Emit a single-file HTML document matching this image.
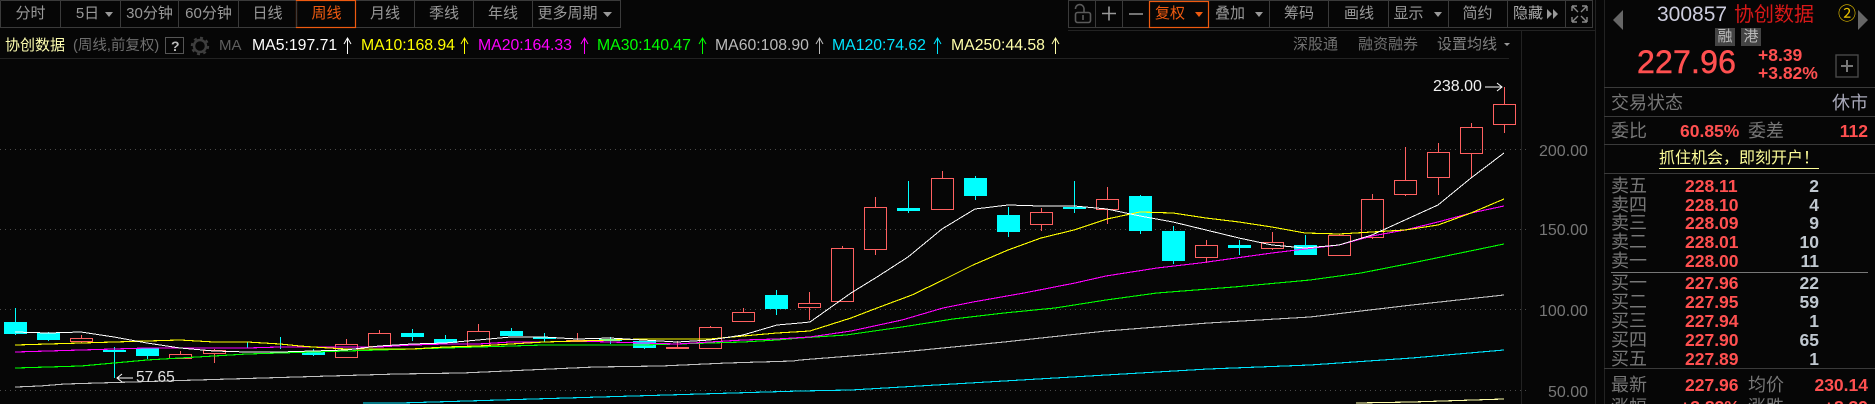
<!DOCTYPE html>
<html lang="zh"><head><meta charset="utf-8"><title>协创数据</title>
<style>
html,body{margin:0;padding:0;background:#060606;}
#p{position:relative;width:1875px;height:404px;overflow:hidden;background:#060606;font-family:"Liberation Sans","Noto Sans CJK SC",sans-serif;color:#888;}
.t{position:absolute;white-space:nowrap;line-height:20px;height:20px;}
.c{position:absolute;top:1px;height:26px;line-height:26px;font-size:15px;color:#999;text-align:center;box-sizing:border-box;border-right:1px solid #3a3a3a;}
.r{color:#ff5050;font-weight:bold;font-size:17.5px;}
.l{color:#777;font-size:18px;left:1611px;}
.q{color:#c0c8d0;font-weight:bold;font-size:17.5px;right:56px;}
.rr{right:7px;}
svg{position:absolute;left:0;top:0;}
</style></head><body><div id="p">
<svg width="1875" height="404" viewBox="0 0 1875 404">
<g fill="none" shape-rendering="crispEdges">
<path stroke="#3a3a3a" d="M0.5 .5H621M.5 .5V27M60.5 0V27M0 27.5H621M1068.5 .5H1592.5V27.5H1068.5ZM1068.5 .5V27M1095.5 0V27M1122.5 0V27M1269.5 0V27M1328.5 0V27M1388.5 0V27M1448.5 0V27M1507.5 0V27M1565.5 0V27"/>
<path stroke="#222" d="M0 58.5H1509M1068 30.5H1595M1595.5 0V404M1521.5 30V404M1604.5 0V404"/>
<path stroke="#3a3a3a" d="M1604 87.5H1875M1604 116.5H1875M1604 144.5H1875M1604 173.5H1875M1604 368.5H1875"/>
<path stroke="#777" d="M1611 272.5H1868"/>
<path stroke="#4a4a4a" stroke-dasharray="1 4" d="M0 149.5H1526M0 229.5H1526M0 309.5H1526M0 390.5H1526"/>
</g>
<path fill="#00ffff" shape-rendering="crispEdges" d="M4 322h23v12h-23zM15 308h1v27h-1zM37 333h23v7h-23zM48 332h1v9h-1zM103 350h23v2h-23zM114 347h1v31h-1zM136 348h23v8h-23zM147 348h1v11h-1zM247 342h1v6h-1zM280 337h1v12h-1zM302 352h23v3h-23zM313 349h1v7h-1zM401 333h23v4h-23zM412 329h1v12h-1zM434 339h23v4h-23zM445 335h1v8h-1zM500 331h23v5h-23zM511 328h1v8h-1zM533 337h23v2h-23zM544 333h1v9h-1zM599 339h23v2h-23zM610 337h1v7h-1zM633 341h23v7h-23zM644 341h1v8h-1zM765 295h23v14h-23zM776 290h1v25h-1zM897 208h23v3h-23zM908 181h1v32h-1zM964 178h23v18h-23zM975 176h1v24h-1zM997 215h23v17h-23zM1008 207h1v30h-1zM1063 207h23v2h-23zM1074 181h1v32h-1zM1129 196h23v35h-23zM1140 195h1v39h-1zM1162 231h23v30h-23zM1173 226h1v38h-1zM1228 245h23v3h-23zM1239 240h1v15h-1zM1294 245h23v10h-23zM1305 235h1v20h-1z"/>
<g fill="none" stroke="#ff6060" stroke-width="1" shape-rendering="crispEdges">
<path d="M81.5 335V338M81.5 341V343M70.5 338.5h22v3h-22z"/>
<path d="M180.5 351V354M180.5 358V359M169.5 354.5h22v4h-22z"/>
<path d="M214.5 349V350M214.5 353V363M203.5 350.5h22v3h-22z"/>
<path d="M346.5 339V344M335.5 344.5h22v13h-22z"/>
<path d="M379.5 330V333M368.5 333.5h22v13h-22z"/>
<path d="M478.5 324V331M467.5 331.5h22v15h-22z"/>
<path d="M577.5 333V340M566.5 340.5h22v1h-22z"/>
<path d="M677.5 341V347M666.5 347.5h22v1h-22z"/>
<path d="M710.5 326V327M699.5 327.5h22v21h-22z"/>
<path d="M743.5 308V312M732.5 312.5h22v9h-22z"/>
<path d="M809.5 292V303M809.5 307V320M798.5 303.5h22v4h-22z"/>
<path d="M842.5 246V248M831.5 248.5h22v53h-22z"/>
<path d="M875.5 197V207M875.5 249V255M864.5 207.5h22v42h-22z"/>
<path d="M942.5 171V178M931.5 178.5h22v31h-22z"/>
<path d="M1041.5 208V212M1041.5 224V231M1030.5 212.5h22v12h-22z"/>
<path d="M1107.5 187V199M1107.5 209V224M1096.5 199.5h22v10h-22z"/>
<path d="M1206.5 240V245M1206.5 257V263M1195.5 245.5h22v12h-22z"/>
<path d="M1272.5 232V242M1272.5 248V250M1261.5 242.5h22v6h-22z"/>
<path d="M1339.5 234V235M1328.5 235.5h22v20h-22z"/>
<path d="M1372.5 194V199M1372.5 237V239M1361.5 199.5h22v38h-22z"/>
<path d="M1405.5 147V180M1405.5 194V196M1394.5 180.5h22v14h-22z"/>
<path d="M1438.5 143V152M1438.5 177V195M1427.5 152.5h22v25h-22z"/>
<path d="M1471.5 123V127M1471.5 153V178M1460.5 127.5h22v26h-22z"/>
<path d="M1504.5 87V104M1504.5 124V133M1493.5 104.5h22v20h-22z"/>
</g>
<g fill="none" stroke-width="1.1" shape-rendering="crispEdges">
<polyline stroke="#ffffaa" points="1356,403 1412,402 1504,399"/>
<polyline stroke="#00e5ff" points="363,403 400,403 467,401 533,399 600,397 667,395 733,393 800,391 851,390 902,387 1004,381 1106,375 1208,369 1310,365 1412,358 1504,350"/>
<polyline stroke="#c0c0c0" points="15,387 40,386 65,384 98,383 132,382 197,380 263,378 330,376 397,374 462,373 528,370 595,367 661,366 727,363 793,361 800,360 902,352 1004,342 1106,331 1208,323 1310,317 1412,305 1504,295"/>
<polyline stroke="#00ff00" points="15,368 48,367 81,366 114,363 147,360 180,358 214,356 247,354 280,353 313,352 346,351 379,350 412,349 445,348 478,347 511,346 544,345 610,345 643,345 677,344 710,343 743,342 777,340 800,338 846,335 902,327 953,319 1004,313 1055,308 1106,300 1157,293 1234,287 1310,280 1361,273 1412,263 1504,244"/>
<polyline stroke="#ff00ff" points="15,352 48,351 81,350 114,349 147,348 180,348 214,348 247,348 280,347 346,347 379,347 412,345 445,344 478,344 511,342 544,342 577,341 610,342 643,343 677,344 710,342 743,340 777,339 810,337 851,331 902,320 943,308 973,302 1024,293 1075,283 1106,276 1157,268 1200,263 1272,253 1305,249 1339,245 1372,236 1405,230 1438,222 1471,213 1504,206"/>
<polyline stroke="#ffff00" points="15,345 48,344 81,343 114,342 147,341 180,340 214,342 247,342 280,344 300,346 313,347 346,349 379,349 412,349 445,347 478,346 511,344 544,342 577,341 610,340 643,339 677,339 710,339 743,336 777,333 810,331 851,318 877,308 912,295 943,280 973,265 1008,250 1041,238 1074,230 1107,219 1140,212 1173,213 1206,218 1239,222 1272,227 1305,233 1339,234 1372,232 1405,230 1438,225 1471,213 1504,199"/>
<polyline stroke="#ffffff" stroke-width="1" points="15,332 48,333 81,332 114,337 147,343 180,348 214,351 247,352 280,352 313,351 346,350 379,346 412,344 445,343 478,340 511,337 544,337 577,339 610,338 643,340 677,342 710,340 743,335 777,325 800,323 810,322 851,293 877,277 908,257 942,229 975,209 1008,205 1041,206 1074,206 1107,209 1140,216 1173,222 1206,230 1239,238 1272,245 1305,248 1339,245 1372,235 1405,220 1438,205 1471,178 1504,153"/>
</g>
<g fill="none" stroke-width="1">
<path stroke="#fff" d="M117 378H133M122 374L117 378L122 382"/>
<path stroke="#fff" d="M1485 87H1502M1497 83L1502 87L1497 91"/>
<path stroke="#fff" d="M347.5 54V38M344 44L347.5 38L351 44"/>
<path stroke="#ffff00" d="M464.5 54V38M461 44L464.5 38L468 44"/>
<path stroke="#ff00ff" d="M584.5 54V38M581 44L584.5 38L588 44"/>
<path stroke="#00ff00" d="M702.5 54V38M699 44L702.5 38L706 44"/>
<path stroke="#bbb" d="M819.5 54V38M816 44L819.5 38L823 44"/>
<path stroke="#00e5ff" d="M937.5 54V38M934 44L937.5 38L941 44"/>
<path stroke="#ffffaa" d="M1055.5 54V38M1052 44L1055.5 38L1059 44"/>
<rect x="165.5" y="37.5" width="18" height="16" stroke="#555"/>
<circle cx="200" cy="46" r="6" stroke="#3e3e3e" stroke-width="2.5"/>
<circle cx="200" cy="46" r="8.2" stroke="#3e3e3e" stroke-width="2" stroke-dasharray="3 3.4"/>
<rect x="1075.5" y="12.5" width="15" height="10" rx="2" stroke="#5a5a5a" stroke-width="1.6"/>
<path stroke="#5a5a5a" stroke-width="1.6" d="M1084 12V8.5A4.3 4.3 0 0 0 1075.5 8V9M1083 15V20"/>
<path stroke="#999" stroke-width="1.6" d="M1102 13.5H1116M1109 6.5V20.5M1129 14H1143"/>
<rect x="1836" y="55" width="22" height="22" stroke="#484848" stroke-width="1.4"/>
<path stroke="#777" stroke-width="2" d="M1847 60V72M1841 66H1853"/>
<rect x="1149.5" y="1.5" width="59" height="26" stroke="#ee5a10" stroke-width="1.2"/>
<rect x="296.5" y=".5" width="59" height="27" stroke="#ee5a10" stroke-width="1.2"/>
<path stroke="#888" stroke-width="1.4" d="M1572 6H1577M1572 6V11M1572 6L1578 12M1587 6H1582M1587 6V11M1587 6L1581 12M1572 22H1577M1572 22V17M1572 22L1578 16M1587 22H1582M1587 22V17M1587 22L1581 16"/>
</g>
<g shape-rendering="auto">
<path fill="#999" d="M105 12h8l-4 5zM603 12h9l-4.500 5zM1255 12h8l-4 5zM1434 12h8l-4 5zM1504 43h6l-3 3zM1547 9l5 5-5 5zM1553 9l5 5-5 5z"/>
<path fill="#ee5a10" d="M1195 12h8l-4 5z"/>
<path fill="#666" d="M1623 10V30L1613 20zM1858 10V30L1868 20z"/>
</g>
</svg>

<div class="c" style="left:1px;width:60px">分时</div>
<div class="c" style="left:61px;width:60px;padding-right:6px">5日</div>
<div class="c" style="left:121px;width:58px">30分钟</div>
<div class="c" style="left:179px;width:60px">60分钟</div>
<div class="c" style="left:239px;width:58px">日线</div>
<div class="c" style="left:297px;width:59px;color:#ee5a10;border:0">周线</div>
<div class="c" style="left:356px;width:59px">月线</div>
<div class="c" style="left:415px;width:59px">季线</div>
<div class="c" style="left:474px;width:59px">年线</div>
<div class="c" style="left:533px;width:88px;padding-right:18px">更多周期</div>

<div class="c" style="left:1149px;width:60px;color:#ee5a10;border:0;padding-right:18px">复权</div>
<div class="c" style="left:1209px;width:60px;border:0;padding-right:18px">叠加</div>
<div class="c" style="left:1269px;width:60px;border:0">筹码</div>
<div class="c" style="left:1329px;width:60px;border:0">画线</div>
<div class="c" style="left:1389px;width:59px;border:0;padding-right:20px">显示</div>
<div class="c" style="left:1448px;width:59px;border:0">简约</div>
<div class="t" style="left:1513px;top:4px;font-size:15px;color:#aaa">隐藏</div>

<div class="t" style="left:5px;top:36px;font-size:15px;color:#ffffb0">协创数据</div>
<div class="t" style="left:73px;top:36px;font-size:14.500px;color:#6e6e6e">(周线,前复权)</div>
<div class="t" style="left:171px;top:36px;font-size:14px;color:#bbb;font-weight:bold">?</div>
<div class="t" style="left:219px;top:36px;font-size:15px;color:#5e5e5e">MA</div>
<div class="t" style="left:252px;top:36px;font-size:15.800px;color:#fff">MA5:197.71</div>
<div class="t" style="left:361px;top:36px;font-size:15.800px;color:#ff0">MA10:168.94</div>
<div class="t" style="left:478px;top:36px;font-size:15.800px;color:#f0f">MA20:164.33</div>
<div class="t" style="left:597px;top:36px;font-size:15.800px;color:#0f0">MA30:140.47</div>
<div class="t" style="left:715px;top:36px;font-size:15.800px;color:#bbb">MA60:108.90</div>
<div class="t" style="left:832px;top:36px;font-size:15.800px;color:#00e5ff">MA120:74.62</div>
<div class="t" style="left:951px;top:36px;font-size:15.800px;color:#ffffaa">MA250:44.58</div>
<div class="t" style="left:1293px;top:35px;font-size:15px;color:#707070">深股通</div>
<div class="t" style="left:1358px;top:35px;font-size:15px;color:#707070">融资融券</div>
<div class="t" style="left:1437px;top:35px;font-size:15px;color:#808080">设置均线</div>

<div class="t" style="left:136px;top:368px;font-size:15.500px;color:#e0e0e0">57.65</div>
<div class="t" style="left:1433px;top:77px;font-size:16px;color:#f0f0f0">238.00</div>
<div class="t" style="left:1539px;top:142px;font-size:16px;color:#777">200.00</div>
<div class="t" style="left:1539px;top:221px;font-size:16px;color:#777">150.00</div>
<div class="t" style="left:1539px;top:302px;font-size:16px;color:#777">100.00</div>
<div class="t" style="left:1548px;top:383px;font-size:16px;color:#777">50.00</div>

<div class="t" style="left:1657px;top:3px;font-size:21px;line-height:24px;height:24px;color:#ccd">300857</div>
<div class="t" style="left:1734px;top:3px;font-size:20px;line-height:24px;height:24px;color:#d81818">协创数据</div>
<div class="t" style="left:1838px;top:4px;font-size:18px;color:#e8c000">②</div>
<div class="t" style="left:1715px;top:28px;width:20px;height:18px;line-height:18px;text-align:center;font-size:15px;color:#bbb;background:#444">融</div>
<div class="t" style="left:1741px;top:28px;width:20px;height:18px;line-height:18px;text-align:center;font-size:15px;color:#bbb;background:#444">港</div>
<div class="t" style="left:1637px;top:45px;font-size:32px;line-height:34px;height:34px;color:#ff5050;-webkit-text-stroke:.5px #ff5050;letter-spacing:.2px">227.96</div>
<div class="t r" style="left:1758px;top:45px">+8.39</div>
<div class="t r" style="left:1758px;top:63px">+3.82%</div>

<div class="t l" style="top:93px">交易状态</div>
<div class="t" style="right:7px;top:93px;font-size:18px;color:#aab">休市</div>
<div class="t l" style="top:121px">委比</div>
<div class="t r" style="left:1680px;top:121px">60.85%</div>
<div class="t l" style="left:1748px;top:121px">委差</div>
<div class="t r rr" style="top:121px">112</div>
<div class="t" style="left:1659px;top:149px;font-size:16px;color:#ffff99;border-bottom:1px solid #ffff99;height:19px;line-height:20px">抓住机会，即刻开户！</div>

<div class="t l" style="top:176px">卖五</div><div class="t r" style="left:1685px;top:176px">228.11</div><div class="t q" style="top:176px">2</div>
<div class="t l" style="top:195px">卖四</div><div class="t r" style="left:1685px;top:195px">228.10</div><div class="t q" style="top:195px">4</div>
<div class="t l" style="top:213px">卖三</div><div class="t r" style="left:1685px;top:213px">228.09</div><div class="t q" style="top:213px">9</div>
<div class="t l" style="top:232px">卖二</div><div class="t r" style="left:1685px;top:232px">228.01</div><div class="t q" style="top:232px">10</div>
<div class="t l" style="top:251px">卖一</div><div class="t r" style="left:1685px;top:251px">228.00</div><div class="t q" style="top:251px">11</div>
<div class="t l" style="top:273px">买一</div><div class="t r" style="left:1685px;top:273px">227.96</div><div class="t q" style="top:273px">22</div>
<div class="t l" style="top:292px">买二</div><div class="t r" style="left:1685px;top:292px">227.95</div><div class="t q" style="top:292px">59</div>
<div class="t l" style="top:311px">买三</div><div class="t r" style="left:1685px;top:311px">227.94</div><div class="t q" style="top:311px">1</div>
<div class="t l" style="top:330px">买四</div><div class="t r" style="left:1685px;top:330px">227.90</div><div class="t q" style="top:330px">65</div>
<div class="t l" style="top:349px">买五</div><div class="t r" style="left:1685px;top:349px">227.89</div><div class="t q" style="top:349px">1</div>

<div class="t l" style="top:375px">最新</div><div class="t r" style="left:1685px;top:375px">227.96</div>
<div class="t l" style="left:1748px;top:375px">均价</div><div class="t r rr" style="top:375px">230.14</div>
<div class="t l" style="top:397px">涨幅</div><div class="t r" style="left:1680px;top:397px">+3.82%</div>
<div class="t l" style="left:1748px;top:397px">涨跌</div><div class="t r rr" style="top:397px">+8.39</div>
</div></body></html>
